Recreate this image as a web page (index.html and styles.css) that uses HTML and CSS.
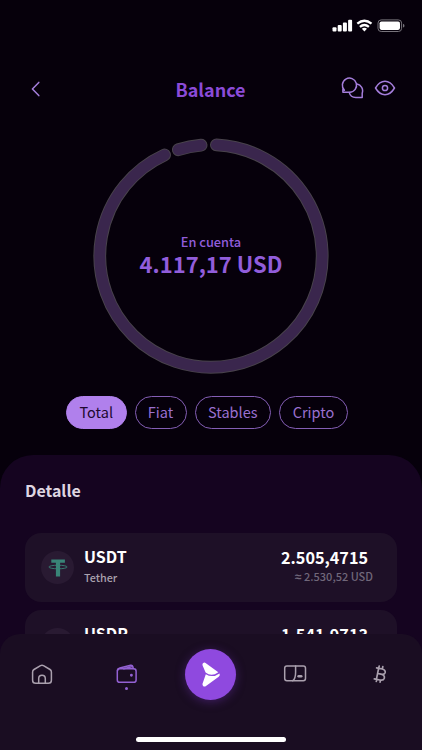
FILE: index.html
```html
<!DOCTYPE html>
<html lang="es">
<head>
<meta charset="utf-8">
<title>Balance</title>
<link rel="stylesheet" href="styles.css">
</head>
<body>
<div class="screen">
  <div class="status">
    <svg width="73" height="14" viewBox="0 0 73 14">
      <g fill="#fff">
        <rect x="0.5" y="8.3" width="4" height="4.2" rx="1"/>
        <rect x="5.7" y="6.1" width="4" height="6.4" rx="1"/>
        <rect x="10.9" y="3.400" width="4" height="9.100" rx="1"/>
        <rect x="16.100" y="0.700" width="4" height="11.800" rx="1"/>
        <path d="M32.400 12.400l-2.600-2.700q2.600-2 5.200 0z"/>
      </g>
      <g fill="none" stroke="#fff" stroke-width="2.300">
        <path d="M25.300 4.700q7.100-5.800 14.200 0"/>
        <path d="M27.900 7.800q4.500-3.700 9 0"/>
      </g>
      <rect x="46" y="0.900" width="23.600" height="11.600" rx="3.200" fill="none" stroke="#77737b"/>
      <rect x="47.600" y="2.500" width="20.400" height="8.400" rx="1.800" fill="#fff"/>
      <path d="M71 4.800q1.500.5 1.500 1.900t-1.500 1.900z" fill="#77737b"/>
    </svg>
  </div>

  <header class="header">
    <svg class="back" width="12" height="18" viewBox="0 0 12 18"><path d="M8.800 2.400L2.400 9l6.400 6.600"/></svg>
    <h1 class="title">Balance</h1>
    <div class="actions">
      <svg width="24" height="24" viewBox="0 0 24 24">
        <path d="M4.400 14.200A7.100 7.100 0 1 1 9.700 16.300H2.900V13Q3.700 13.400 4.400 14.200"/>
        <path d="M17 8a7 7 0 0 1 5.200 9.200v4.400H15.800a7 7 0 0 1-6.600-5.200"/>
      </svg>
      <svg width="22" height="24" viewBox="0 0 22 24">
        <path d="M1.500 12Q5.500 5.300 11 5.300T20.500 12Q16.500 18.700 11 18.700T1.500 12z"/>
        <circle cx="11" cy="12" r="2.600"/>
      </svg>
    </div>
  </header>

  <section class="chart">
    <svg class="ring" width="240" height="240" viewBox="0 0 240 240">
      <g class="ring-edge">
        <path d="M125.430 8.930A111.200 111.200 0 1 1 73.530 18.970"/>
        <path d="M87.300 13.720A111.200 111.200 0 0 1 110.110 9.240"/>
      </g>
      <g class="ring-fill">
        <path d="M125.430 8.930A111.200 111.200 0 1 1 73.530 18.970"/>
        <path d="M87.300 13.720A111.200 111.200 0 0 1 110.110 9.240"/>
      </g>
    </svg>
    <div class="total">
      <div class="total-label">En cuenta</div>
      <div class="total-value">4.117,17 USD</div>
    </div>
  </section>

  <div class="chips">
    <span class="chip chip-total">Total</span>
    <span class="chip chip-fiat">Fiat</span>
    <span class="chip chip-stables">Stables</span>
    <span class="chip chip-cripto">Cripto</span>
  </div>

  <section class="sheet">
    <h2 class="sheet-title">Detalle</h2>
    <div class="asset">
      <div class="coin">
        <svg width="20" height="20" viewBox="0 0 20 20">
          <path d="M3.300 1.400h13.600v3.300h-4.800v13.800h-4.200v-13.800h-4.600z" fill="#398477"/>
          <ellipse cx="10" cy="9" rx="9.200" ry="1.800" fill="none" stroke="#398477" stroke-width=".9"/>
        </svg>
      </div>
      <div class="names"><div class="code">USDT</div><div class="name">Tether</div></div>
      <div class="amounts"><div class="amount">2.505,4715</div><div class="approx"><span class="approx-sign">≈</span> 2.530,52 USD</div></div>
    </div>
    <div class="asset">
      <div class="coin"></div>
      <div class="names"><div class="code">USDP</div></div>
      <div class="amounts"><div class="amount">1.541,9713</div></div>
    </div>
  </section>

  <nav class="nav">
    <div class="tabs">
      <div class="tab">
        <svg width="24" height="24" viewBox="0 0 24 24">
          <path d="M4 6.500L10.500 2.600Q12 1.800 13.500 2.600L20 6.500Q21.400 7.400 21.400 9V17.200Q21.400 20.300 18.300 20.300H5.700Q2.600 20.300 2.600 17.200V9Q2.600 7.400 4 6.500z"/>
          <path d="M8.700 20.200V15.600a3.300 3.300 0 0 1 6.600 0v4.600"/>
        </svg>
      </div>
      <div class="tab tab-active">
        <svg width="24" height="24" viewBox="0 0 24 24">
          <rect x="2.300" y="5.800" width="18.800" height="13.500" rx="2.400"/>
          <path d="M2.500 7.300Q2.800 5.500 4.800 5L15.600 2.200Q17.400 1.900 17.800 3.500L18.300 5.600M8.800 5.700L17.500 3.500"/>
          <circle cx="16.400" cy="12.300" r=".7"/>
        </svg>
        <i class="dot"></i>
      </div>
      <div class="tab">
        <div class="send">
          <svg width="20" height="26" viewBox="0 0 20 26">
            <path d="M2.200 1.100Q3.400 0 4.900 1.200L17.300 10.200Q10.500 15.300 4.600 10.500L1.600 3.500Q1 2 2.200 1.100z"/>
            <path d="M4.800 12.200Q11.500 16.400 18.500 11.400Q19.500 13.300 17.700 14.700L5 24Q3.600 25 2.300 24.200Q1.200 23.300 1.500 21.800z"/>
          </svg>
        </div>
      </div>
      <div class="tab">
        <svg width="24" height="24" viewBox="0 0 24 24">
          <rect x="1.700" y="3" width="20.800" height="14.800" rx="2.200"/>
          <path d="M12.600 3.100V9.200Q12.600 15.700 9.800 17.700"/>
          <path d="M15.600 13.200h2.600" stroke-width="2.600"/>
        </svg>
      </div>
      <div class="tab">
        <svg class="bitcoin" width="24" height="24" viewBox="0 0 24 24">
          <path d="M8.600 4.900L14.200 6Q17.900 7 17.100 9.700Q16.400 11.800 13.100 11.200Q17.100 12.200 16.300 15.200Q15.500 17.700 11.800 17L6.300 15.900M10.600 5.400L8.400 16.300M9.600 10.500L13.100 11.200M11.200 3L10.700 5.200M14.800 3.700L14.300 5.900M8.800 16.400L8.300 18.400M12.500 17.200L12.100 19.100"/>
        </svg>
      </div>
    </div>
    <div class="home-bar"></div>
  </nav>
</div>
</body>
</html>
```
FILE: styles.css
```css
* { box-sizing: border-box; }
body {
  margin: 0;
  background: #06000b;
  font-family: "Noto Sans CJK JP", "Noto Sans", sans-serif;
}
h1, h2 { margin: 0; }
svg { display: block; }
.screen {
  position: relative;
  width: 422px;
  height: 750px;
  overflow: hidden;
  display: flex;
  flex-direction: column;
  background: #06000b;
}
.status {
  height: 62px;
  padding: 19px 17px 0 0;
  display: flex;
  justify-content: flex-end;
}
.header {
  height: 56px;
  padding: 0 26px 0 30px;
  display: grid;
  grid-template-columns: 51px 1fr 56px;
  align-items: center;
}
.header svg {
  fill: none;
  stroke: #a47ddb;
  stroke-width: 1.500px;
  stroke-linecap: round;
  stroke-linejoin: round;
}
.header .back { margin-top: -2px; }
.title {
  margin-top: -2px;
  color: #8b4bd8;
  font-size: 18px;
  line-height: 28px;
  font-weight: 700;
  text-align: center;
}
.actions {
  display: flex;
  justify-content: flex-end;
  gap: 10px;
  margin-top: -4px;
}
.chart {
  display: grid;
  justify-content: center;
  padding: 18px 0 20px;
}
.ring, .total { grid-area: 1 / 1; }
.ring { fill: none; stroke-linecap: round; }
.ring-edge { stroke: #49434c; stroke-width: 12.800px; }
.ring-fill { stroke: #3a264d; stroke-width: 10.900px; }
.total {
  padding-top: 96px;
  text-align: center;
  color: #915ddb;
  white-space: nowrap;
}
.total-label { font-size: 12.800px; line-height: 20px; font-weight: 500; }
.total-value { font-size: 22px; line-height: 22px; font-weight: 700; }
.chips {
  display: flex;
  justify-content: center;
  gap: 8px;
  padding-right: 8px;
}
.chip {
  height: 33px;
  border: 1px solid #845eb5;
  border-radius: 17px;
  color: #9a70d0;
  font-size: 14.500px;
  line-height: 30px;
  text-align: center;
}
.chip-total { width: 60.500px; color: #20082f; background: #b080ec; border-color: #b080ec; }
.chip-fiat { width: 52px; }
.chip-stables { width: 76.500px; }
.chip-cripto { width: 69px; }
.sheet {
  margin-top: 26px;
  flex: 1 0 294px;
  padding: 22px 25px 0;
  border-radius: 33px 33px 0 0;
  background: #150420;
}
.sheet-title {
  height: 56px;
  color: #ded5e1;
  font-size: 16px;
  line-height: 26px;
  font-weight: 700;
}
.asset {
  height: 69px;
  margin-bottom: 8px;
  padding: 0 24px 0 16px;
  display: flex;
  border-radius: 16px;
  background: #1e1027;
}
.coin {
  width: 33px;
  height: 33px;
  margin: 18px 10px 0 0;
  display: grid;
  place-items: center;
  border-radius: 50%;
  background: #291a32;
}
.names { flex: 1; padding-top: 12px; }
.code { color: #fff; font-size: 16px; line-height: 22px; font-weight: 700; }
.name { color: #aaa1ae; font-size: 10.800px; line-height: 20px; font-weight: 500; }
.amounts { padding-top: 13px; text-align: right; }
.amount { margin-right: 5px; color: #fff; font-size: 16.200px; line-height: 22px; font-weight: 700; }
.approx { color: #70677a; font-size: 11px; line-height: 16px; font-weight: 500; }
.approx-sign { font-family: "Noto Sans", sans-serif; font-size: 12px; line-height: 1; font-weight: 700; }
.nav {
  position: absolute;
  left: 0;
  right: 0;
  bottom: 0;
  height: 116px;
  padding-top: 15px;
  border-radius: 20px 20px 0 0;
  background: #1a0d22;
}
.tabs {
  height: 88px;
  display: grid;
  grid-template-columns: repeat(5, 1fr);
}
.tab { display: grid; justify-items: center; align-content: start; padding-top: 14px; }
.tab svg {
  fill: none;
  stroke: #aaa0ae;
  stroke-width: 1.500px;
  stroke-linecap: round;
  stroke-linejoin: round;
}
.tab-active svg { stroke: #9361d3; }
.tab .bitcoin { stroke-width: 1.700px; }
.dot { width: 3px; height: 3px; border-radius: 50%; background: #9361d3; }
.send {
  width: 51px;
  height: 51px;
  margin-top: -14px;
  display: grid;
  place-items: center;
  border-radius: 50%;
  background: #8f49df;
  box-shadow: 0 2px 10px #5e2b9788;
}
.tab .send svg { fill: #fff; stroke: none; }
.home-bar { width: 150px; height: 5px; margin: 0 auto; border-radius: 3px; background: #fff; }
```
